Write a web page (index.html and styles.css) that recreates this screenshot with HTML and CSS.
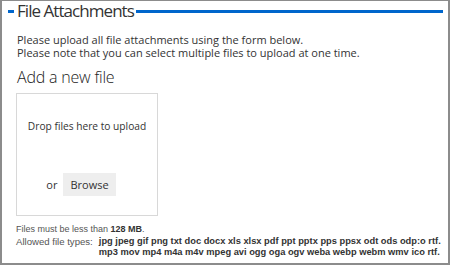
FILE: index.html
```html
<!DOCTYPE html>
<html>
<head>
    <title>File Attachments</title>
    <link rel="stylesheet" href="styles.css">
</head>
<body>
    <div class="frame">
        <div class="legend">
            <span class="dash"></span>
            <h2>File Attachments</h2>
            <span class="rule"></span>
        </div>

        <p class="intro">
            Please upload all file attachments using the form below.<br>
            Please note that you can select multiple files to upload at one time.
        </p>

        <h3>Add a new file</h3>

        <div class="dropzone">
            <div class="drop-text">Drop files here to upload</div>
            <div class="browse-row">
                <span>or</span>
                <span class="button">Browse</span>
            </div>
        </div>

        <div class="help">
            <div>Files must be less than <b>128 MB</b>.</div>
            <div class="types">
                <span class="label">Allowed file types:</span>
                <b>jpg jpeg gif png txt doc docx xls xlsx pdf ppt pptx pps ppsx odt ods odp:o rtf. mp3 mov mp4 m4a m4v mpeg avi ogg oga ogv weba webp webm wmv ico rtf.</b>
            </div>
        </div>
    </div>
</body>
</html>
```

FILE: styles.css
```css
body {
    margin: 0;
    background-color: white;
    font-family: "Open Sans", sans-serif;
    color: #333;
}
.frame {
    width: 446px;
    height: 262px;
    border: 2px solid #8c8c8c;
    border-top-width: 1px;
    overflow: hidden;
}
.legend {
    display: flex;
    align-items: center;
    padding: 0 5px 0 6px;
    height: 20px;
}
.dash {
    width: 6px;
    height: 3px;
    background-color: #0066cc;
    margin-right: 3px;
}
.legend h2 {
    margin: 0;
    font-size: 17px;
    letter-spacing: -0.95px;
    font-weight: normal;
    line-height: 20px;
    color: #333;
}
.rule {
    flex: 1;
    height: 3px;
    background-color: #0066cc;
    margin-left: 2px;
}
.intro {
    margin: 12px 0 0 15px;
    font-size: 11px;
    line-height: 13px;
}
h3 {
    margin: 8px 0 0 15px;
    font-size: 16px;
    letter-spacing: -0.2px;
    font-weight: 300;
    line-height: 20px;
    color: #222;
}
.dropzone {
    margin: 6px 0 0 14px;
    width: 142px;
    height: 123px;
    border: 1px solid #d8d8d8;
    text-align: center;
    display: flex;
    flex-direction: column;
    justify-content: space-between;
    padding: 25px 0 19px;
    box-sizing: border-box;
}
.drop-text {
    font-size: 10.2px;
}
.browse-row {
    display: flex;
    align-items: center;
    justify-content: center;
    gap: 6px;
    margin-right: 12px;
    font-size: 11px;
}
.button {
    background-color: #eeeeee;
    padding: 4px 7px;
}
.help {
    margin: 8px 0 0 14px;
    font-family: "Liberation Sans", sans-serif;
    font-size: 9px;
    line-height: 11.5px;
    color: #555;
}
.help b {
    color: #333;
}
.types {
    display: flex;
    white-space: nowrap;
}
.types .label {
    width: 83px;
    font-size: 9.6px;
}
.types b {
    white-space: normal;
    width: 350px;
    font-size: 9.3px;
}
```
